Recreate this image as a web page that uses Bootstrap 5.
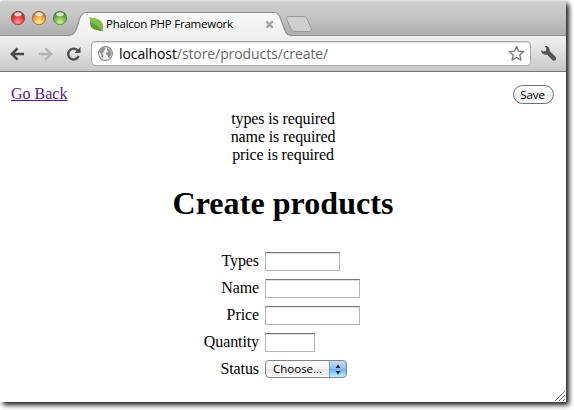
<!DOCTYPE html>
<html lang="en">
<head>
<meta charset="utf-8">
<meta name="viewport" content="width=device-width, initial-scale=1">
<title>Phalcon PHP Framework</title>
<link href="https://cdn.jsdelivr.net/npm/bootstrap@5.3.0/dist/css/bootstrap.min.css" rel="stylesheet">
<style>
body{background:#fff;overflow:hidden;height:410px;font-family:"Liberation Serif",serif;font-size:16px;line-height:18px;color:#000}
svg{display:block;flex:none}
.window{width:566px;height:402px;background:#fff;border-radius:4px 4px 0 0;box-shadow:3px 3px 5px rgba(0,0,0,.9)}
.ui{font-family:"Open Sans","Noto Sans",sans-serif;white-space:nowrap}
.tabstrip{height:36px;background:linear-gradient(#e6e6e6 0,#cecece 2px,#c9c9c9 12px,#aeaeae 35px);border-radius:4px 4px 0 0;overflow:hidden}
.tabshape{position:absolute;left:0;top:0}
.lights{padding:10px 0 0 10px;gap:5px}
.tabbody{margin-left:20px;padding-top:12px;width:186px;height:36px}
.tabtitle{font-size:11.5px;line-height:24px;margin-left:2px;letter-spacing:-.23px;color:#000}
.toolbar{height:36px;background:linear-gradient(#f0f0f0,#e3e3e3 14px,#c8c8c8 34px);border-bottom:1px solid #747474;padding:5px 9px 5px 10px}
.address{width:440px;height:25px;border:1px solid #a9a9a9;border-radius:4px;background:#fff;box-shadow:inset 0 1px 1px #ddd;margin-left:10px;padding:0 5px 0 6px}
.forward,.reload{margin-left:13px}
.url{font-size:14px;line-height:22px;color:#666;margin-left:6px;letter-spacing:-.09px}
.url b{font-weight:400;color:#000}
.page{padding:13px 12px 0 11px}
.page a{color:#551a8b;line-height:18px}
.save{font-size:11.5px;line-height:13px;width:41px;height:19px;padding:0 2px 1px 0;border:1.5px solid #6f6f6f;border-radius:10px;background:linear-gradient(#fff 0,#f5f5f5 48%,#e8e8e8 52%,#fff);color:#000;letter-spacing:-.1px}
.messages{margin-top:6px;letter-spacing:-.13px}
.heading{font-size:32px;line-height:36px;font-weight:700;margin:21px 0 26px;letter-spacing:.06px}
.fields{display:grid;grid-template-columns:259px auto;column-gap:6px;grid-auto-rows:27px;align-items:center;justify-items:start}
.fields label{justify-self:end;letter-spacing:-.1px}
.field{height:19px;border:1px solid #b5b5b5;border-top-color:#777;border-radius:0;padding:0 2px;margin-top:2px;background:#fff;box-shadow:inset 0 1px 0 #e0e0e0;outline:0;font-size:11px}
.w75{width:75px}.w95{width:95px}.w50{width:50px}
.choose{width:82px;height:18px;margin-top:1px;border:1px solid #858585;border-radius:4px;background:linear-gradient(#fff 0,#f4f4f4 48%,#e6e6e6 52%,#fcfcfc);font-size:11.5px;line-height:15px;padding:0 0 0 7px;color:#000;overflow:hidden}
.arrows{width:18px;height:18px;margin:-1px -1px -1px 0;border:1px solid #3b62a8;border-left-color:#6c9cd2;border-radius:0 4px 4px 0;background:linear-gradient(#c3dbf5 0,#91bff0 48%,#6fb0ee 52%,#bdf0ff)}
.grip{position:absolute;right:0;bottom:0}
</style>
</head>
<body>
<main class="window position-relative">
  <header class="tabstrip ui d-flex position-relative">
    <svg class="tabshape" width="566" height="36" viewBox="0 0 566 36">
      <defs><linearGradient id="tg" x1="0" y1="0" x2="0" y2="1"><stop offset="0" stop-color="#f8f8f8"/><stop offset="1" stop-color="#efefef"/></linearGradient></defs>
      <path d="M0 35.500H69C74 35 76 30 78 24C80 17 81 12.500 87 12.500H274C279 12.500 280 17 282 22C285 30 286 35.500 292 35.500H566" fill="none" stroke="#8c8c8c"/>
      <path d="M70 36C75 35.500 77 30 79 24C81 17 82 13 87 13H274C278 13 279 17 281 22C284 30 285 36 291 36Z" fill="url(#tg)"/>
      <path d="M289 16.500H303C306 16.500 307 18 308 21L311 28C312 30.500 311 31.500 309 31.500H296C293 31.500 291 30 290 27L287 20C286 18 287 16.500 289 16.500Z" fill="#cfcfcf" stroke="#989898"/>
    </svg>
    <div class="lights d-flex position-relative">
      <svg width="16" height="16" viewBox="0 0 16 16"><defs><radialGradient id="r1" cx=".5" cy=".8" r=".75"><stop offset="0" stop-color="#ff9c91"/><stop offset=".5" stop-color="#e5484a"/><stop offset="1" stop-color="#96262b"/></radialGradient></defs><circle cx="8" cy="8" r="6.700" fill="url(#r1)" stroke="#8b4347" stroke-width=".8"/><ellipse cx="8" cy="4.200" rx="3.700" ry="2" fill="#fff" opacity=".75"/></svg>
      <svg width="16" height="16" viewBox="0 0 16 16"><defs><radialGradient id="r2" cx=".5" cy=".8" r=".75"><stop offset="0" stop-color="#ffee96"/><stop offset=".5" stop-color="#f3b253"/><stop offset="1" stop-color="#a85f22"/></radialGradient></defs><circle cx="8" cy="8" r="6.700" fill="url(#r2)" stroke="#97683f" stroke-width=".8"/><ellipse cx="8" cy="4.200" rx="3.700" ry="2" fill="#fff" opacity=".75"/></svg>
      <svg width="16" height="16" viewBox="0 0 16 16"><defs><radialGradient id="r3" cx=".5" cy=".8" r=".75"><stop offset="0" stop-color="#cdf39c"/><stop offset=".5" stop-color="#7fb956"/><stop offset="1" stop-color="#3e7327"/></radialGradient></defs><circle cx="8" cy="8" r="6.700" fill="url(#r3)" stroke="#557e45" stroke-width=".8"/><ellipse cx="8" cy="4.200" rx="3.700" ry="2" fill="#fff" opacity=".75"/></svg>
    </div>
    <div class="tabbody d-flex align-items-center position-relative">
      <svg width="16" height="16" viewBox="0 0 16 16"><rect width="16" height="16" fill="#fff"/><path d="M1 1C5 3 13 2 14.500 8C15 11 14 13 15.500 15.500C10 14 4 14.500 2.500 10C1.500 7 3 4 1 1Z" fill="#5f9f2d"/><path d="M1 1C5 3 13 2 14.500 8C14.800 10 14.300 12 15 14.500C12 8 4 8 1 1Z" fill="#86bd4c"/><path d="M1.500 2.500C4 8.500 11 8 15 15" fill="none" stroke="#b9dc98" stroke-width=".6"/></svg>
      <span class="tabtitle">Phalcon PHP Framework</span>
      <svg class="ms-auto" width="9" height="9" viewBox="0 0 9 9"><path d="M1.300 1.300L7.700 7.700M7.700 1.300L1.300 7.700" stroke="#a3a3a3" stroke-width="2.300"/></svg>
    </div>
  </header>
  <nav class="toolbar ui d-flex align-items-center">
    <svg width="15" height="14" viewBox="0 0 15 14"><path d="M14 7H2M7.500 1.300L1.800 7L7.500 12.700" fill="none" stroke="#484848" stroke-width="2.500"/></svg>
    <svg class="forward" width="15" height="14" viewBox="0 0 15 14"><path d="M1 7H13M7.500 1.300L13.200 7L7.500 12.700" fill="none" stroke="#b5b5b5" stroke-width="2.500"/></svg>
    <svg class="reload" width="15" height="16" viewBox="0 0 15 16"><path d="M11.500 4.300A5.400 5.400 0 1 0 12.600 10" fill="none" stroke="#505050" stroke-width="2.400"/><path d="M14.500 1V7H8.500Z" fill="#505050"/></svg>
    <div class="address d-flex align-items-center">
      <svg width="15" height="15" viewBox="0 0 15 15"><circle cx="7.500" cy="7.500" r="6.900" fill="#f7f7f7" stroke="#858585" stroke-width="1.100"/><path d="M2 4L5 1.500L7.500 2L7 4L5.500 5L6 6.500L4 7L5.500 9L5 12.500L3.500 10.500L3 8L1.300 6ZM9 2L12 3.500L13.700 7L12.500 10.500L10.500 12.500L10 10L8 8.500L8.500 6.500L10.500 6L9 4.500Z" fill="#929292"/></svg>
      <span class="url"><b>localhost</b>/store/products/create/</span>
      <svg class="ms-auto" width="17" height="17" viewBox="0 0 17 17"><path d="M8.500 1.400L10.500 6.100L15.700 6.600L11.800 10L13 15.200L8.500 12.400L4 15.200L5.200 10L1.300 6.600L6.500 6.100Z" fill="#fff" stroke="#777" stroke-width="1.300" stroke-linejoin="round"/></svg>
    </div>
    <svg class="ms-auto" width="17" height="17" viewBox="0 0 17 17"><path d="M4.500 1C7 .5 10 2 9.700 6L16 12.300C17 14.500 14.800 16.500 12.700 15.500L7 9.400C4 10.500 1 8.500 1 5L3.500 6.600L6 5.800L6.400 3.300Z" fill="#555"/></svg>
  </nav>
  <section class="page">
    <div class="d-flex justify-content-between align-items-start">
      <a href="#" class="text-decoration-underline">Go Back</a>
      <button class="save ui" type="button">Save</button>
    </div>
  </section>
  <div class="messages text-center">types is required<br>name is required<br>price is required</div>
  <h1 class="heading text-center">Create products</h1>
  <form class="fields">
    <label for="types">Types</label><input id="types" class="field w75">
    <label for="name">Name</label><input id="name" class="field w95">
    <label for="price">Price</label><input id="price" class="field w95">
    <label for="qty">Quantity</label><input id="qty" class="field w50">
    <label for="status">Status</label>
    <button id="status" class="choose ui d-flex justify-content-between" type="button"><span>Choose...</span><span class="arrows d-flex align-items-center justify-content-center"><svg width="6" height="11" viewBox="0 0 6 11"><path d="M3 .5L5.500 4H.5ZM3 10.500L5.500 7H.5Z" fill="#152238"/></svg></span></button>
  </form>
  <svg class="grip" width="12" height="12" viewBox="0 0 12 12"><path d="M1 11L11 1M5 11L11 5M9 11L11 9" stroke="#777"/></svg>
</main>
<script src="https://cdn.jsdelivr.net/npm/bootstrap@5.3.0/dist/js/bootstrap.bundle.min.js"></script>
</body>
</html>
